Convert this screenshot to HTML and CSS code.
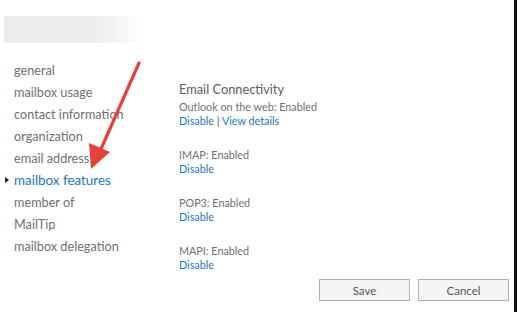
FILE: index.html
```html
<!DOCTYPE html>
<html lang="en">
<head>
    <meta charset="UTF-8">
    <title>Mailbox features</title>
    <link rel="stylesheet" href="styles.css">
</head>
<body>
    <div class="dialog">
        <header>
            <div class="name-blur"></div>
        </header>
        <main>
            <nav class="side-nav">
                <a>general</a>
                <a>mailbox usage</a>
                <a>contact information</a>
                <a>organization</a>
                <a>email address</a>
                <a class="active">mailbox features</a>
                <a>member of</a>
                <a>MailTip</a>
                <a>mailbox delegation</a>
            </nav>
            <section class="content">
                <h2>Email Connectivity</h2>
                <div class="setting first">
                    <div class="status">Outlook on the web: Enabled</div>
                    <div class="links"><a>Disable</a> | <a>View details</a></div>
                </div>
                <div class="setting">
                    <div class="status">IMAP: Enabled</div>
                    <div class="links"><a>Disable</a></div>
                </div>
                <div class="setting">
                    <div class="status">POP3: Enabled</div>
                    <div class="links"><a>Disable</a></div>
                </div>
                <div class="setting">
                    <div class="status">MAPI: Enabled</div>
                    <div class="links"><a>Disable</a></div>
                </div>
            </section>
        </main>
        <footer>
            <button>Save</button>
            <button>Cancel</button>
        </footer>
        <!-- annotation arrow pointing at the active item -->
        <svg class="arrow" width="517" height="312" viewBox="0 0 517 312">
            <line x1="139" y1="63" x2="101" y2="149" stroke="#e8403a" stroke-width="3.2" stroke-linecap="round"/>
            <polygon points="91,169 89,143 110,152" fill="#e8403a"/>
        </svg>
    </div>
</body>
</html>
```

FILE: styles.css
```css
/* Reset default styles */
* {
    margin: 0;
    padding: 0;
    box-sizing: border-box;
}
body {
    font-family: 'Lato', 'Liberation Sans', sans-serif;
    background-color: #fff;
    color: #707070;
}
.dialog {
    position: relative;
    width: 517px;
    height: 312px;
    border-right: 3px solid #111; /* window edge */
    display: flex;
    flex-direction: column;
}
header {
    padding: 16px 0 0 4px;
    height: 59px;
}
.name-blur {
    width: 142px;
    height: 27px;
    background: linear-gradient(to right, #ececec 0%, #eeeeee 65%, #fff 100%);
}
main {
    display: flex;
    flex: 1;
}
.side-nav {
    width: 179px;
    display: flex;
    flex-direction: column;
}
.side-nav a {
    position: relative;
    display: block;
    padding-left: 14px;
    height: 22px;
    line-height: 22px;
    font-size: 12.7px;
    color: #707070;
    white-space: nowrap;
}
.side-nav a.active {
    color: #1b78c4;
    font-size: 13.4px;
}
.side-nav a.active::before {
    content: "";
    position: absolute;
    left: 5px;
    top: 8px;
    border-left: 4px solid #222;
    border-top: 3px solid transparent;
    border-bottom: 3px solid transparent;
}
.content {
    padding-top: 20px;
}
.content h2 {
    font-weight: normal;
    font-size: 12.8px;
    line-height: 20px;
    color: #5c5c5c;
}
.setting {
    margin-top: 20px;
    font-size: 10.8px;
    line-height: 14px;
}
.setting.first {
    margin-top: 1px;
}
.links {
    color: #555;
}
.links a {
    color: #1b78c4;
}
footer {
    display: flex;
    justify-content: flex-end;
    gap: 8px;
    padding: 0 5px 11px 0;
}
footer button {
    width: 91px;
    height: 22px;
    font-family: 'Lato', 'Liberation Sans', sans-serif;
    font-size: 11.5px;
    color: #555;
    background-color: #f5f5f5;
    border: 1px solid #b0b0b0;
}
.arrow {
    position: absolute;
    left: 0;
    top: 0;
}
```
